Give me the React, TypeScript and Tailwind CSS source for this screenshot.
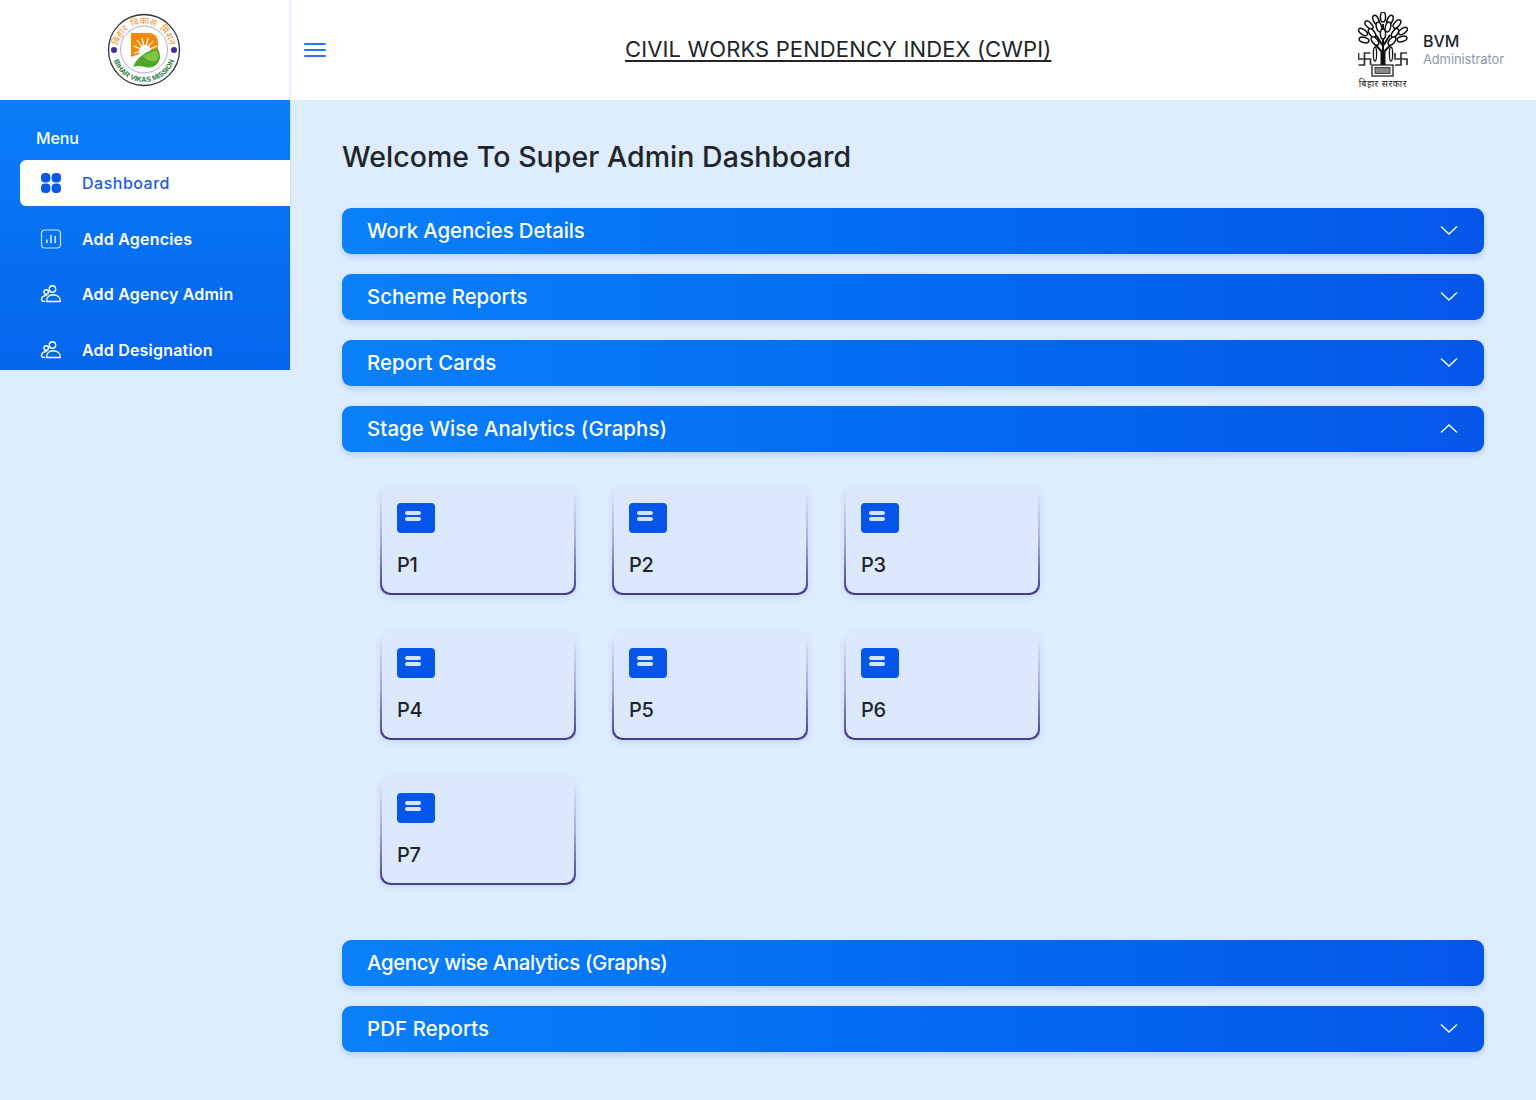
import React from "react";

const font = { fontFamily: "Inter, 'Noto Sans', sans-serif" };

function Logo() {
  return (
    <svg width="74" height="74" viewBox="0 0 74 74" aria-label="Bihar Vikas Mission">
      <defs>
        <path id="top" d="M12.2 44 A25.8 25.8 0 1 1 61.8 44" />
        <path id="bot" d="M5 37 A32 32 0 0 0 69 37" />
      </defs>
      <circle cx="37" cy="37" r="35.5" fill="#fff" stroke="#333" strokeWidth="1.3" />
      <circle cx="37" cy="36.5" r="23.5" fill="#fff" stroke="#8f86cf" strokeWidth="0.7" />
      <circle cx="7" cy="37" r="3" fill="#3b2f9c" />
      <circle cx="67" cy="37" r="3" fill="#3b2f9c" />
      <text fontSize="9.5" fill="#f0932b" wordSpacing="2" fontFamily="'Noto Sans', sans-serif">
        <textPath href="#top" startOffset="50%" textAnchor="middle">बिहार विकास मिशन</textPath>
      </text>
      <text fontSize="7.2" fontWeight="700" fill="#1c7a3a" fontFamily="'Liberation Sans', sans-serif">
        <textPath href="#bot" startOffset="50%" textAnchor="middle">BIHAR VIKAS MISSION</textPath>
      </text>
      <path d="M24 20 H43 Q51 21 51 30 V36 L40 38 L24 44 Z" fill="#f58a0a" />
      <circle cx="38" cy="38" r="6" fill="#fff" />
      <path d="M38 38 L27 33 M38 38 L30 27 M38 38 L35 25 M38 38 L41 25 M38 38 L46 28 M38 38 L50 33 M38 38 L27 40" stroke="#fff" strokeWidth="1.2" />
      <path d="M26 54 Q29 46 37 41 Q44 36 51 36 Q55 44 51 50 Q46 56 38 54 Q31 52 26 54 Z" fill="#4da62a" />
      <path d="M36 43 Q44 38 50 38 Q53 44 49 48 Q42 50 36 43 Z" fill="#7cc545" />
    </svg>
  );
}

function Swastika({ x, y }: { x: number; y: number }) {
  return (
    <path
      transform={`translate(${x} ${y})`}
      d="M12 0 H6 V12 H0 M0 0 V6 H12 V12"
      fill="none"
      stroke="#333"
      strokeWidth="1.7"
    />
  );
}

function Emblem() {
  const leaves: [number, number, number][] = [
    [25, 5, 0], [18, 8, -25], [32, 8, 25], [11, 13, -45], [39, 12, 40], [21, 15, -15], [30, 15, 15],
    [5, 20, -55], [45, 19, 55], [14, 21, -35], [37, 21, 35], [25, 22, 0], [6, 28, -75], [44, 27, 75],
    [17, 29, -40], [34, 29, 40],
  ];
  return (
    <div className="flex w-[50px] flex-col items-center">
      <svg width="50" height="67" viewBox="0 0 50 67" aria-label="Bihar emblem">
        <path d="M25 53 V28 M25 41 L14 29 M25 41 L36 29 M25 34 L18 23 M25 34 L32 23 M25 28 V12" fill="none" stroke="#111" strokeWidth="2" />
        {leaves.map(([x, y, r], i) => (
          <ellipse key={i} cx={x} cy={y} rx="2.6" ry="5" fill="#fff" stroke="#111" strokeWidth="1.5" transform={`rotate(${r} ${x} ${y})`} />
        ))}
        <path d="M22.5 53 V40 H27.5 V53" fill="#111" />
        <ellipse cx="17" cy="42" rx="1.6" ry="7" fill="#fff" stroke="#111" strokeWidth="1.3" />
        <ellipse cx="33" cy="42" rx="1.6" ry="7" fill="#fff" stroke="#111" strokeWidth="1.3" />
        <Swastika x={0.5} y={41} />
        <Swastika x={37} y={41} />
        <rect x="14" y="53" width="21" height="11" fill="#fff" stroke="#222" strokeWidth="1.3" />
        <rect x="17" y="55.5" width="15" height="6" fill="#888" stroke="#222" strokeWidth="0.8" />
      </svg>
      <span className="text-[9px] leading-[10px] tracking-[0.6px] whitespace-nowrap text-[#222]" style={{ fontFamily: "'Noto Sans', sans-serif" }}>बिहार सरकार</span>
    </div>
  );
}

function DashIcon() {
  return (
    <svg width="22" height="22" viewBox="0 0 22 22" fill="#0a59e6">
      <rect x="1" y="1" width="9.4" height="9.4" rx="4" /><rect x="11.6" y="1" width="9.4" height="9.4" rx="4" />
      <rect x="1" y="11.6" width="9.4" height="9.4" rx="4" /><rect x="11.6" y="11.6" width="9.4" height="9.4" rx="4" />
    </svg>
  );
}
function ChartIcon() {
  return (
    <svg width="22" height="22" viewBox="0 0 22 22" fill="none" stroke="#fff" strokeWidth="1.2" strokeLinecap="round">
      <rect x="1.5" y="2" width="19" height="18" rx="3.5" stroke="#cfe0ff" />
      <path d="M6.8 14.5 V12 M11 14.5 V7.5 M15.2 14.5 V8.5" strokeWidth="1.7" stroke="#cfe0ff" />
    </svg>
  );
}
function PeopleIcon() {
  return (
    <svg width="22" height="22" viewBox="0 0 22 22" fill="none" stroke="#fff" strokeWidth="1.4" strokeLinecap="round" strokeLinejoin="round">
      <circle cx="12.5" cy="6" r="3.2" />
      <path d="M6.5 18.5 C6.5 14 9.5 11.8 13 11.8 C17 11.8 20.5 14 20.5 18.5 Z" />
      <circle cx="6.2" cy="9" r="2.3" />
      <path d="M6.5 12.6 C3 12.6 1.5 14.5 1.5 16.5 C1.5 18 3 18.5 4.5 18.5" />
    </svg>
  );
}

function NavItem({ icon, label, className }: { icon: React.ReactNode; label: string; className: string }) {
  return (
    <div className={`flex items-center pl-[20px] text-white ${className}`}>
      <span className="flex w-[22px] justify-center">{icon}</span>
      <span className="ml-[20px] text-[16px] leading-6 font-semibold tracking-[0.2px]">{label}</span>
    </div>
  );
}

function Chevron({ up }: { up?: boolean }) {
  return (
    <svg width="18" height="11" viewBox="0 0 18 11" fill="none" stroke="#fff" strokeWidth="1.4">
      <path d={up ? "M1 9.5 L9 2 L17 9.5" : "M1 1.5 L9 9 L17 1.5"} />
    </svg>
  );
}

function Accordion({ title, open, noIcon, track = "tracking-[0.1px]" }: { title: string; open?: boolean; noIcon?: boolean; track?: string }) {
  return (
    <div className="flex h-[45.7px] items-center justify-between rounded-[9px] bg-gradient-to-r from-[#0a80f9] to-[#0556e8] pr-[26px] pl-[25px] shadow-[0_3px_6px_rgba(20,80,180,0.18)]">
      <span className={`text-[20.4px] leading-7 font-medium text-white ${track}`}>{title}</span>
      {noIcon ? null : <Chevron up={open} />}
    </div>
  );
}

function Card({ label }: { label: string }) {
  return (
    <div className="h-[108px] w-[196px] rounded-[10px] bg-gradient-to-b from-[#e2edfe] via-[#a9a9da] to-[#47398f] px-[2px] pb-[2px] shadow-[0_2px_6px_rgba(60,80,160,0.12)]">
      <div className="flex h-full flex-col rounded-[9px] bg-[#dce8fe] px-[15px] pt-[16px]">
        <div className="flex h-[30px] w-[38px] items-center rounded-[4px] bg-[#0556e8] pl-[8px]">
          <div className="flex -translate-y-[2px] flex-col gap-[2px]">
            <div className="h-[4px] w-[16px] rounded-full bg-[#d6e4ff]" />
            <div className="h-[4px] w-[16px] rounded-full bg-[#d6e4ff]" />
          </div>
        </div>
        <span className="mt-[18px] text-[20px] leading-7 font-medium tracking-[-0.3px] text-[#212529]">{label}</span>
      </div>
    </div>
  );
}

export default function App() {
  return (
    <div className="flex min-h-[1100px] flex-col bg-[#ddecff]" style={font}>
      <header className="flex h-[100px] bg-white">
        <div className="flex w-[291px] shrink-0 items-center justify-center border-r-2 border-[#e3eefe] pr-[2px]">
          <Logo />
        </div>
        <div className="flex flex-1 items-center pl-[13px]">
          <svg width="22" height="16" viewBox="0 0 22 16" stroke="#2179f5" strokeWidth="2" strokeLinecap="round">
            <path d="M1 2 H21 M1 8 H21 M1 14 H21" />
          </svg>
          <div className="flex-1 -translate-y-[1px] pl-[299px]">
            <span className="text-[22px] leading-7 tracking-[0.12px] whitespace-nowrap text-[#212529] underline underline-offset-[3px]">CIVIL WORKS PENDENCY INDEX (CWPI)</span>
          </div>
          <div className="flex items-center pr-[32px]">
            <Emblem />
            <div className="ml-[15px] flex -translate-y-[2px] flex-col">
              <span className="text-[16px] leading-[22px] font-medium text-[#212529]">BVM</span>
              <span className="text-[13px] leading-[14px] tracking-[-0.1px] text-[#8d97ad]">Administrator</span>
            </div>
          </div>
        </div>
      </header>
      <div className="flex flex-1">
        <aside className="h-[270px] w-[291px] shrink-0 overflow-hidden border-r border-[#cfe2fd] bg-gradient-to-b from-[#0a7df8] to-[#0565ec] pt-[26px]">
          <div className="pl-[36px] text-[16px] leading-[24px] font-medium tracking-[-0.1px] text-white">Menu</div>
          <div className="mt-[10px] ml-[20px] flex h-[46px] items-center rounded-l-[6px] bg-white pl-[20px]">
            <span className="flex w-[22px] justify-center"><DashIcon /></span>
            <span className="ml-[20px] text-[16px] leading-6 font-medium tracking-[0.5px] text-[#1a5be0]">Dashboard</span>
          </div>
          <div className="ml-[20px]">
            <NavItem icon={<ChartIcon />} label="Add Agencies" className="mt-[21px] h-[24px]" />
            <NavItem icon={<PeopleIcon />} label="Add Agency Admin" className="mt-[31px] h-[24px]" />
            <NavItem icon={<PeopleIcon />} label="Add Designation" className="mt-[32px] h-[24px]" />
          </div>
        </aside>
        <main className="flex-1 pt-[36px] pr-[52px] pl-[51px]">
          <h1 className="text-[28.5px] leading-[42px] font-medium tracking-[0.05px] text-[#212529]">Welcome To Super Admin Dashboard</h1>
          <div className="mt-[30px] flex flex-col gap-[20.3px]">
            <Accordion title="Work Agencies Details" track="tracking-[-0.1px]" />
            <Accordion title="Scheme Reports" track="tracking-[0px]" />
            <Accordion title="Report Cards" />
            <div>
              <Accordion title="Stage Wise Analytics (Graphs)" open />
              <div className="flex flex-wrap gap-x-[36px] gap-y-[37px] pt-[35.3px] pr-[400px] pb-[34.7px] pl-[38px]">
                {["P1", "P2", "P3", "P4", "P5", "P6", "P7"].map((p) => (
                  <Card key={p} label={p} />
                ))}
              </div>
            </div>
            <Accordion title="Agency wise Analytics (Graphs)" noIcon track="tracking-[-0.37px]" />
            <Accordion title="PDF Reports" />
          </div>
        </main>
      </div>
    </div>
  );
}
